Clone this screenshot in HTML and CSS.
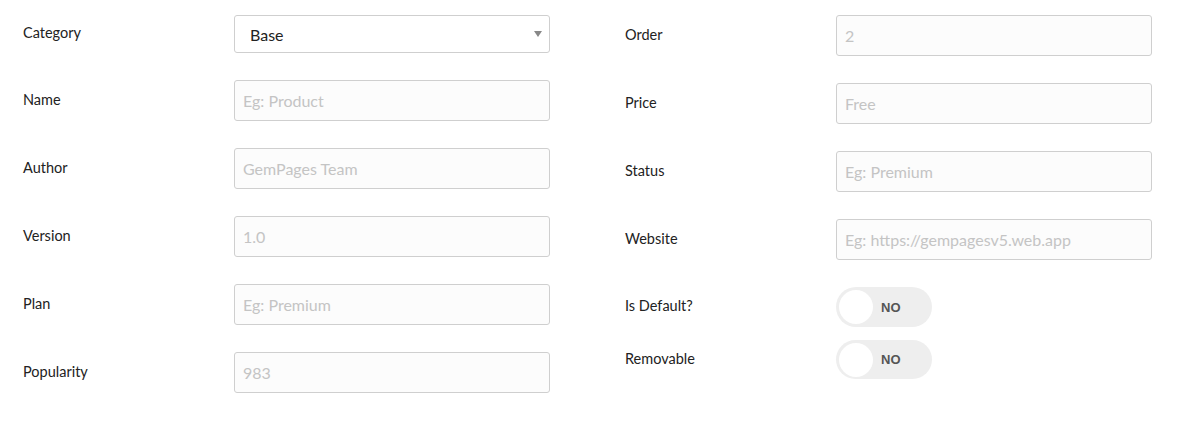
FILE: index.html
```html
<!DOCTYPE html>
<html>
<head>
<meta charset="utf-8">
<link rel="stylesheet" href="styles.css">
</head>
<body>
<div class="form">
  <div class="col">
    <div class="row row-select">
      <label class="lbl">Category</label>
      <div class="select">
        <span class="select-value">Base</span>
        <span class="caret"></span>
      </div>
    </div>
    <div class="row">
      <label class="lbl">Name</label>
      <input class="inp" placeholder="Eg: Product">
    </div>
    <div class="row">
      <label class="lbl">Author</label>
      <input class="inp" placeholder="GemPages Team">
    </div>
    <div class="row">
      <label class="lbl">Version</label>
      <input class="inp" placeholder="1.0">
    </div>
    <div class="row">
      <label class="lbl">Plan</label>
      <input class="inp" placeholder="Eg: Premium">
    </div>
    <div class="row">
      <label class="lbl">Popularity</label>
      <input class="inp" placeholder="983">
    </div>
  </div>
  <div class="col">
    <div class="row">
      <label class="lbl">Order</label>
      <input class="inp" placeholder="2">
    </div>
    <div class="row">
      <label class="lbl">Price</label>
      <input class="inp" placeholder="Free">
    </div>
    <div class="row">
      <label class="lbl">Status</label>
      <input class="inp" placeholder="Eg: Premium">
    </div>
    <div class="row">
      <label class="lbl">Website</label>
      <input class="inp" placeholder="Eg: https://gempagesv5.web.app">
    </div>
    <div class="row row-toggle">
      <label class="lbl">Is Default?</label>
      <div class="toggle"><span class="knob"></span><span class="toggle-text">NO</span></div>
    </div>
    <div class="row row-toggle row-toggle2">
      <label class="lbl">Removable</label>
      <div class="toggle"><span class="knob"></span><span class="toggle-text">NO</span></div>
    </div>
  </div>
</div>
</body>
</html>
```

FILE: styles.css
```css
* { box-sizing: border-box; }
html, body { margin: 0; padding: 0; background: #fff; }
body {
  font-family: Lato, "Noto Sans", sans-serif;
  color: #222;
  width: 1181px;
  height: 429px;
  overflow: hidden;
}
.form {
  display: grid;
  grid-template-columns: 527px 527px;
  column-gap: 75px;
  padding: 15px 0 0 23px;
}
.col {
  display: flex;
  flex-direction: column;
  gap: 27px;
}
.row {
  display: grid;
  grid-template-columns: 211px 316px;
  align-items: center;
}
.lbl {
  font-size: 14.5px;
  color: #222;
  padding-bottom: 3px;
}
.inp {
  height: 41px;
  width: 316px;
  border: 1px solid #cfcfcf;
  border-radius: 3px;
  background: #fcfcfc;
  padding: 0 8px;
  font-family: Lato, "Noto Sans", sans-serif;
  font-size: 16px;
  color: #333;
  outline: none;
}
.inp::placeholder { color: #c4c4c4; }
.select {
  height: 38px;
  width: 316px;
  border: 1px solid #cfcfcf;
  border-radius: 3px;
  background: #fff;
  display: flex;
  align-items: center;
  justify-content: space-between;
  padding: 0 7px 0 15px;
}
.select-value { font-size: 16px; color: #222; }
.caret {
  width: 0; height: 0;
  border-left: 4px solid transparent;
  border-right: 4px solid transparent;
  border-top: 6px solid #888;
}
.toggle {
  width: 96px;
  height: 40px;
  border-radius: 20px;
  background: #eeeeee;
  display: flex;
  align-items: center;
  padding-left: 3px;
}
.row-toggle2 { margin-top: -14px; }
.row-toggle2 .toggle { height: 39px; }
.knob {
  width: 34px;
  height: 34px;
  border-radius: 50%;
  background: #fff;
}
.toggle-text {
  margin-left: 8px;
  font-family: "Liberation Sans", Arial, sans-serif;
  font-weight: 700;
  font-size: 13px;
  color: #555;
}
```
